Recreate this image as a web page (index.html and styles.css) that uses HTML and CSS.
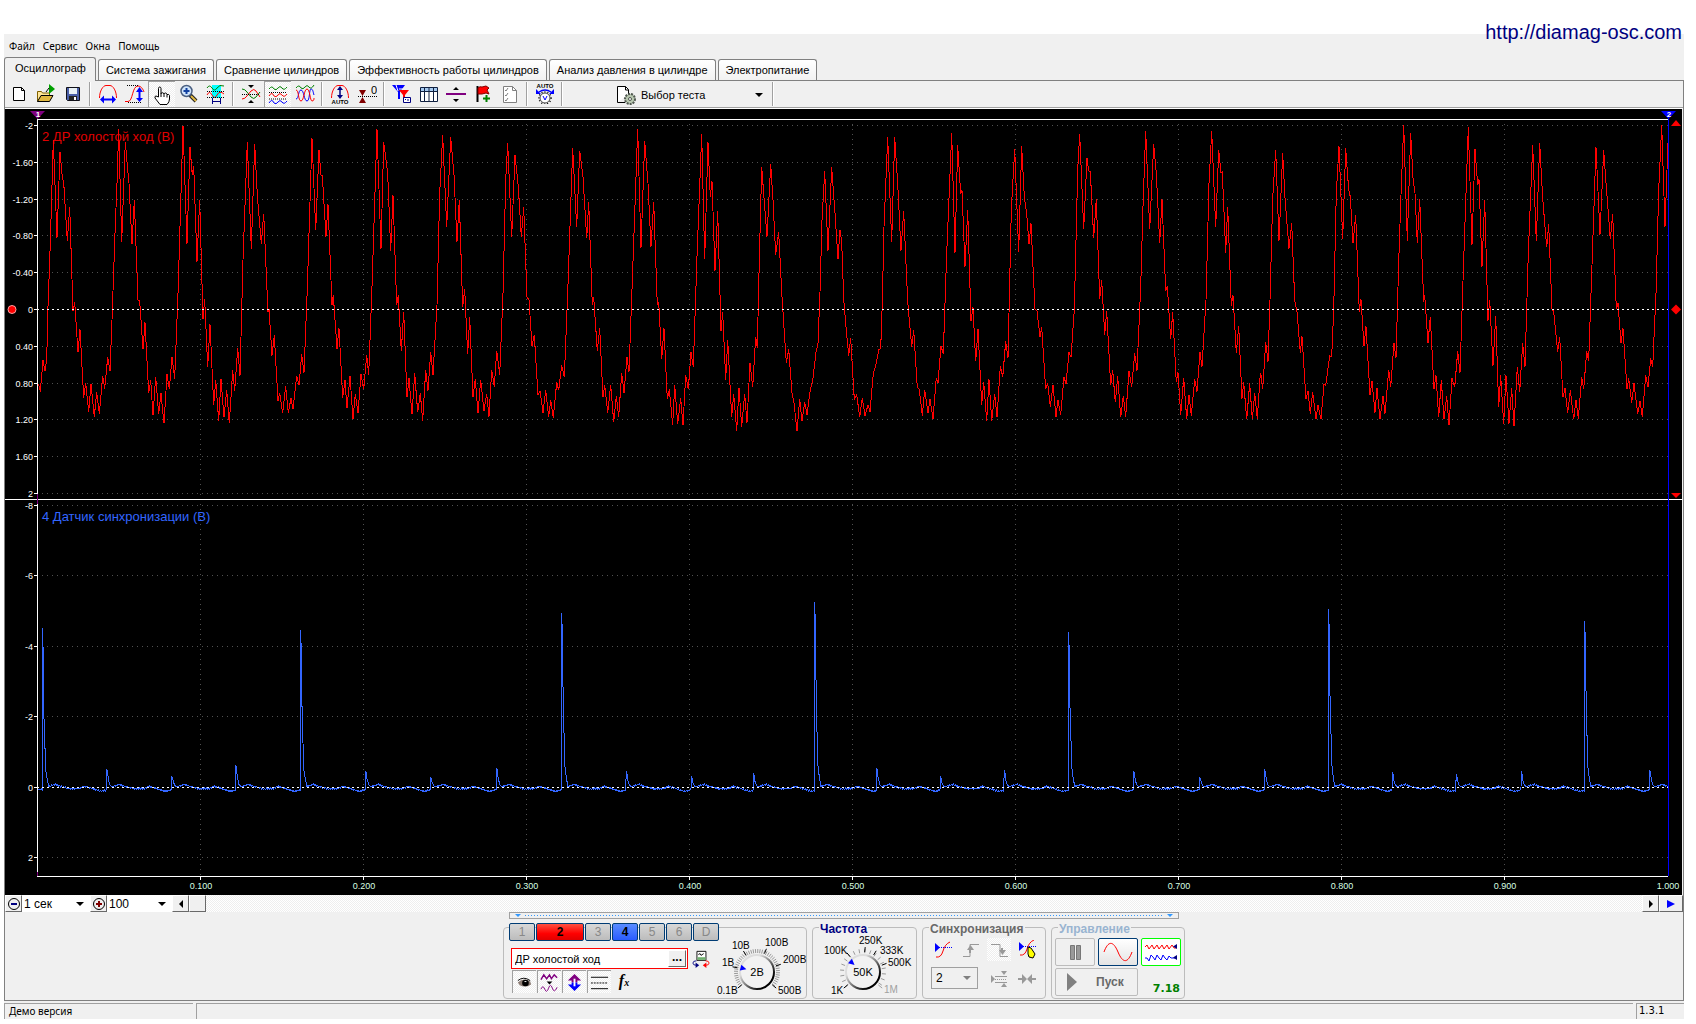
FILE: index.html
```html
<!DOCTYPE html>
<html lang="ru">
<head>
  <meta charset="UTF-8" />
  <meta name="viewport" content="width=device-width, initial-scale=1.0" />
  <title>Осциллограф</title>
  <link rel="stylesheet" href="styles.css">
</head>
<body>
  <a class="site-link" href="http://diamag-osc.com">http://diamag-osc.com</a>

  <div class="window">
    <nav class="menu">
      <a href="#">Файл</a>
      <a href="#">Сервис</a>
      <a href="#">Окна</a>
      <a href="#">Помощь</a>
    </nav>

    <div class="tabs" role="tablist">
      <button class="tab active" role="tab" aria-selected="true">Осциллограф</button>
      <button class="tab" role="tab">Система зажигания</button>
      <button class="tab" role="tab">Сравнение цилиндров</button>
      <button class="tab" role="tab">Эффективность работы цилиндров</button>
      <button class="tab" role="tab">Анализ давления в цилиндре</button>
      <button class="tab" role="tab">Электропитание</button>
    </div>

    <main class="page">
      <div class="toolbar">
        <button aria-label="Новый"><svg viewBox="0 0 20 20"><path d="M4.500 3.500h8l3 3v10h-11z" fill="#fff" stroke="#000"/><path d="M12.500 3.500v3h3" fill="none" stroke="#000"/></svg></button>
        <button aria-label="Открыть"><svg viewBox="0 0 20 20"><path d="M1.500 17.500v-10h4l1 1.500h7v3" fill="#ffe79a" stroke="#806000"/><path d="M1.500 17.500l3.500-6h12l-3.500 6z" fill="#e0b840" stroke="#000"/><path d="M13 0l6 5-6 5z" fill="#00a000"/><path d="M10 8l3-4" stroke="#000"/></svg></button>
        <button aria-label="Сохранить"><svg viewBox="0 0 20 20"><path d="M3.500 3.500h13v13h-12l-1-1z" fill="#4a5fa8" stroke="#101018"/><path d="M6 4h8v6H6z" fill="#e8f0f4"/><path d="M6 12h8v4H6z" fill="#222"/><path d="M11 13h2v3h-2z" fill="#fff"/></svg></button>
        <span class="sep"></span>
        <button aria-label="Время"><svg viewBox="0 0 20 20"><path d="M1.500 14C1.500 7 5 1.500 8 1.500h4c3 0 6.500 5.500 6.500 12.500" fill="none" stroke="red"/><path d="M5 15.500h10" stroke="#00f" stroke-width="2"/><path d="M6 11.500v8l-4-4zM14 11.500v8l4-4z" fill="#00f"/></svg></button>
        <button aria-label="Амплитуда"><svg viewBox="0 0 20 20"><path d="M0 17.500h3c5 0 4-15.500 10-15.500 3 0 5 3 6 6" fill="none" stroke="red"/><path d="M2 1.500h12M3 18.500h13" stroke="#000" stroke-dasharray="1 1"/><path d="M14.500 6v9" stroke="#00f" stroke-width="2"/><path d="M11 8l3.500-5L18 8zM11 14l3.500 4 3.500-4z" fill="#00f"/></svg></button>
        <button class="pressed" aria-label="Рука"><svg viewBox="0 0 20 20"><path d="M6.500 12V3.500q0-1.500 1.200-1.500t1.300 1.500V9q0-1.300 1.300-1.300T12 9q.3-1 1.500-1t1.500 1.500q2-.5 2.500 1V14q0 3-2.500 5.500H8L3 13q-.5-2 1-2z" fill="#fff" stroke="#000"/><path d="M9 9v3M12 9v3M15 9.500v3" stroke="#000"/></svg></button>
        <button aria-label="Лупа"><svg viewBox="0 0 20 20"><path d="M11 11l6 6" stroke="#222" stroke-width="4"/><path d="M12 12l5 5" stroke="#e0b840" stroke-width="2"/><circle cx="7.500" cy="7" r="5.500" fill="#cfe4fa" stroke="#4a5f80" stroke-width="1.500"/><path d="M4.500 7h6M7.500 4v6" stroke="#1040a0" stroke-width="2"/></svg></button>
        <button aria-label="Фрагмент"><svg viewBox="0 0 20 20"><path d="M6 1h9v13H6z" fill="#0ff"/><path d="M1 4q2.500-4 5 0t5 0 7-2" fill="none" stroke="green"/><path d="M1 11q2.500-5 5 0t5 0 7-1" fill="none" stroke="red"/><path d="M1 7.500h18M1 13.500h18" stroke="#000" stroke-dasharray="1 1"/><path d="M6.500 14v6M14.500 14v6M7 17.500h8" stroke="navy"/></svg></button>
        <span class="sep"></span>
        <button aria-label="Совместить нули"><svg viewBox="0 0 20 20"><path d="M1 5q3 0 5 3l4 5q3 3 5 0l4-5" fill="none" stroke="green"/><path d="M1 15q3 0 5-3l4-5q3-3 5 0l4 6" fill="none" stroke="red"/><path d="M1 10.500h18" stroke="#000" stroke-dasharray="1 1"/><path d="M7 1h6l-3 3zM7 19h6l-3-3z"/></svg></button>
        <button class="pressed" aria-label="Раздельно"><svg viewBox="0 0 20 20"><path d="M1 4q3-4 5 0 2 2 4-1t4 0 5-1" fill="none" stroke="green"/><path d="M1 11q3-5 5 0 2 2 4-1t4 0 5-1" fill="none" stroke="red"/><path d="M1 18q3-5 5 0 2 2 4-1t4 0 5-1" fill="none" stroke="#00f"/><path d="M1 7.500h18M1 14h18" stroke="#000" stroke-dasharray="1 1"/></svg></button>
        <button aria-label="Вместе"><svg viewBox="0 0 20 20"><path d="M1 4q3-4 5 0 2 2 4-1t4 0 5-2" fill="none" stroke="green"/><path d="M1 15C4 15 3 6 6 6s3 11 6 11 2-12 4-12 2 3 3 6" fill="none" stroke="#00f"/><path d="M1 6c3 0 2 11 5 11S9 5 12 5s3 12 5 12 2-2 2-3" fill="none" stroke="red"/></svg></button>
        <span class="sep"></span>
        <button aria-label="Авто амплитуда"><svg viewBox="0 0 20 20"><path d="M1.500 14C1.500 7 5 1.500 8 1.500h4c3 0 6.500 5.500 6.500 12.500" fill="none" stroke="red"/><path d="M10 4v9" stroke="navy" stroke-width="1.500"/><path d="M7 6l3-4 3 4zM7 11l3 4 3-4z" fill="navy"/><text x="10" y="20" class="tiny">AUTO</text></svg></button>
        <button aria-label="Установить ноль"><svg viewBox="0 0 20 20"><path d="M2 6h7l-3.500 6zM2 19h7l-3.500-6z" fill="maroon"/><path d="M1 12.500h19" stroke="#000" stroke-dasharray="1 1"/><text x="17" y="10" class="zero">0</text></svg></button>
        <span class="sep"></span>
        <button aria-label="Фильтр"><svg viewBox="0 0 20 20"><path d="M0 1h13L8 8v7H6V8z" fill="#00f"/><path d="M7 6h10l-4 5v4h-2v-4z" fill="red"/><path d="M4 1l2 6M7 5h4" stroke="#fff"/><path d="M11.500 13.500h7v5h-7z" fill="#fff" stroke="navy"/><path d="M13 15.500h1M15 16h2" stroke="navy"/></svg></button>
        <button aria-label="Таблица"><svg viewBox="0 0 20 20"><path d="M1.500 3.500h17v14h-17z" fill="#fff" stroke="#102040"/><path d="M2 4h16v3H2z" fill="#a6caf0"/><path d="M1 7.500h18M5.500 3v14M10 3v14M14.500 3v14" stroke="#102040"/></svg></button>
        <button aria-label="Разделитель"><svg viewBox="0 0 20 20"><path d="M0 10h20" stroke="purple" stroke-width="2"/><path d="M7 6h6l-3-3zM7 15h6l-3 3z"/></svg></button>
        <button aria-label="Метка"><svg viewBox="0 0 20 20"><path d="M4.500 2v16" stroke="#000" stroke-width="2"/><path d="M5 4q2-2 4-1l4-1 3 2-2 2 2 4-3-1-4 1H5z" fill="red" stroke="#800000"/><path d="M13.500 11v7M10 14.500h7" stroke="green" stroke-width="2"/></svg></button>
        <button aria-label="Список"><svg viewBox="0 0 20 20"><path d="M3.500 2.500h9l4 4v12h-13z" fill="#fff" stroke="#808080"/><path d="M12.500 2.500v4h4" fill="none" stroke="#808080"/><path d="M5 6l1 1 2-3M5 11l1 1 2-3M5 16l1 1 2-3" fill="none" stroke="#808080"/></svg></button>
        <span class="sep"></span>
        <button aria-label="Авто предел"><svg viewBox="0 0 20 20"><text x="10" y="4" class="tiny">AUTO</text><path d="M4 8q6-4 12 0" fill="none" stroke="#00f" stroke-width="1.500"/><path d="M1 5v5h5zM19 5v5h-5z" fill="#00f"/><circle cx="10" cy="14" r="6" fill="none" stroke="#000" stroke-width="1.500" stroke-dasharray="1 2"/><circle cx="10" cy="14" r="5" fill="#fff" stroke="#444"/><path d="M8 12l2 4 2-4" fill="none" stroke="#00f"/></svg></button>
        <span class="sep"></span>
        <div class="test-picker">
          <svg viewBox="0 0 20 20"><path d="M1.500 17.500v-16h8l3 3v5M9 17.500H1.500" fill="#fff" stroke="#000"/><path d="M9.500 1.500v3.500h3" fill="none" stroke="#000"/><circle cx="14" cy="14" r="5" fill="#b8c8b0" stroke="#505850" stroke-width="2" stroke-dasharray="2 1"/><circle cx="14" cy="14" r="1.500" fill="#fff" stroke="#505850"/></svg>
          <label class="picker">
            <select aria-label="Выбор теста"><option>Выбор теста</option></select>
          </label>
        </div>
        <span class="sep"></span>
      </div>

      <div class="scope"><svg id="scope"></svg></div>

      <div class="scroll-row">
        <button class="raised" aria-label="Уменьшить"><svg viewBox="0 0 14 14"><circle cx="7" cy="7" r="5.500" fill="none" stroke="#000"/><path d="M4 7h6" stroke="navy" stroke-width="2"/></svg></button>
        <label class="picker white"><select aria-label="Развертка"><option>1 сек</option></select></label>
        <button class="raised" aria-label="Увеличить"><svg viewBox="0 0 14 14"><circle cx="7" cy="7" r="5.500" fill="none" stroke="#000"/><path d="M4 7h6M7 4v6" stroke="maroon" stroke-width="2"/></svg></button>
        <label class="picker white"><select aria-label="Масштаб"><option>100</option></select></label>
        <button class="raised" aria-label="Влево"><svg viewBox="0 0 14 14"><path d="M9 3v8L5 7z"/></svg></button>
        <div class="track"><span class="thumb"></span></div>
        <button class="raised" aria-label="Вправо"><svg viewBox="0 0 14 14"><path d="M5 3v8l4-4z"/></svg></button>
        <button class="raised wide" aria-label="Воспроизвести"><svg viewBox="0 0 14 14"><path d="M3 3v8l8-4z" fill="#00f"/></svg></button>
      </div>

      <div class="bottom">
        <div class="controls">
          <div class="splitter"><i></i><span></span><i></i></div>

          <div class="groups">
            <section class="group channel">
              <div class="channel-left">
                <div class="channels">
                  <button>1</button>
                  <button class="red">2</button>
                  <button>3</button>
                  <button class="blue">4</button>
                  <button>5</button>
                  <button>6</button>
                  <button>D</button>
                </div>
                <div class="name-row">
                  <div class="name-box">
                    <input type="text" value="ДР холостой ход" aria-label="Название канала">
                    <button aria-label="Выбрать датчик">...</button>
                  </div>
                  <svg viewBox="0 0 20 20"><path d="M5.500 1.500h10v10h-10z" fill="#fff" stroke="#000"/><path d="M6 8h9v3H6z" fill="#70b070"/><path d="M7 5l2-1 1 2 3-2" fill="none" stroke="#000"/><path d="M5 12q-4 0-4 2.500T5 17" fill="none" stroke="navy"/><path d="M4 14v6l4-3z" fill="navy"/><path d="M15 12q4 0 4 2.500T15 17" fill="none" stroke="red"/><path d="M16 14v6l-4-3z" fill="red"/></svg>
                </div>
                <div class="view-row">
                  <button class="pressed" aria-label="Показать"><svg viewBox="0 0 20 20"><path d="M3 10q6-6 13-1l1 3q-6 4-12 1z" fill="#8c7c74"/><circle cx="11" cy="10.500" r="3.500"/><path d="M3 8q6-5 13 0" fill="none" stroke="#000"/><path d="M10 9h2" stroke="#fff"/></svg></button>
                  <button class="pressed" aria-label="Сжать"><svg viewBox="0 0 20 20"><path d="M1 7l3-5 3 4 3-4 2 4 3-4 3 3" fill="none" stroke="purple" stroke-width="1.500"/><path d="M7 9h6l-3 3z"/><path d="M1 17q2-5 4 0t4-1 4 0 5-1" fill="none" stroke="purple"/></svg></button>
                  <button class="pressed" aria-label="Инвертировать"><svg viewBox="0 0 20 20"><path d="M10 1l7 7h-4v2H7V8H3z" fill="purple"/><path d="M10 19l7-7h-4v-2H7v2H3z" fill="#00f"/><path d="M10 6v8" stroke="#fff" stroke-width="2"/></svg></button>
                  <button class="pressed" aria-label="Линии"><svg viewBox="0 0 20 20"><path d="M1 4.500h18M1 16.500h18" stroke="#000"/><path d="M1 10.500h18" stroke="#000" stroke-dasharray="2 1"/></svg></button>
                  <button class="fx" aria-label="Функция">f<small>x</small></button>
                </div>
              </div>
              <svg class="dial-volts" id="volts" viewBox="0 0 86 68"></svg>
            </section>

            <section class="group freq">
              <h2>Частота</h2>
              <svg class="dial-freq" id="freq" viewBox="0 0 103 62"></svg>
            </section>

            <section class="group sync">
              <h2>Синхронизация</h2>
              <div class="sync-grid">
                <button aria-label="Уровень"><svg viewBox="0 0 20 20"><path d="M2 3v9l5-4.500z" fill="#00f"/><path d="M2 7.500h17" stroke="#00f" stroke-dasharray="1 1"/><path d="M3 17q5 1 7-6t7-9" fill="none" stroke="red"/></svg></button>
                <button aria-label="По фронту"><svg viewBox="0 0 20 20"><path d="M2 16.500h7v-12h9" fill="none" stroke="#999"/><path d="M9 8v5" stroke="#999" stroke-width="2"/><path d="M6 10l3.500-5 3.500 5z" fill="#999"/></svg></button>
                <button class="dither" aria-label="По спаду"><svg viewBox="0 0 20 20"><path d="M2 4.500h9v12h8" fill="none" stroke="#999"/><path d="M13 8v5" stroke="#999" stroke-width="2"/><path d="M10 10l3.500 5 3.500-5z" fill="#999"/></svg></button>
                <button aria-label="Уровень мышью"><svg viewBox="0 0 20 20"><path d="M2 2v9l5-4.500z" fill="#00f"/><path d="M2 6.500h17" stroke="#00f" stroke-dasharray="1 1"/><path d="M3 15q5 1 7-6t7-9" fill="none" stroke="red"/><path d="M11 7l3 1 4 6-2 4-4-1-1-3z" fill="#ff0" stroke="#000"/></svg></button>
                <label class="picker boxed"><select aria-label="Канал синхронизации"><option>2</option></select></label>
                <button aria-label="Окно"><svg viewBox="0 0 20 20"><path d="M2 6v8l4-4z" fill="#999"/><path d="M6 7.500h12M6 13.500h12" stroke="#999"/><path d="M6 10.500h12" stroke="#999" stroke-dasharray="1 1"/><path d="M12 2h6l-3 4zM12 18h6l-3-4z" fill="#999"/></svg></button>
                <button aria-label="Сузить"><svg viewBox="0 0 20 20"><path d="M1 10h6M13 10h6" stroke="#999" stroke-width="2"/><path d="M5 5v10l5-5zM15 5v10l-5-5z" fill="#999"/></svg></button>
              </div>
            </section>

            <section class="group run">
              <h2>Управление</h2>
              <div class="run-grid">
                <button aria-label="Пауза"><svg viewBox="0 0 34 22"><path d="M12.500 4.500h4v14h-4zM18.500 4.500h4v14h-4z" fill="#999" stroke="#777"/></svg></button>
                <button class="focus" aria-label="Осциллограмма"><svg viewBox="0 0 34 22"><path d="M3 11C7 0 12-1 17 11s10 11 14 0" fill="none" stroke="red"/></svg></button>
                <button class="green" aria-label="Каналы"><svg viewBox="0 0 34 22"><path d="M1 6l2-2 2 4 3-4 2 4 3-4 2 4 3-4 2 4 3-4 2 4 3-4 2 3h2" fill="none" stroke="red"/><path d="M1 17h2l2 3 2-6 2 2 2 3 2-5 2 3 2 2 2-5 2 3 2 2 2-4 2 2h4" fill="none" stroke="#00f"/><path d="M33 3v5l-4-2.500zM33 14v5l-4-2.500z" fill="navy"/></svg></button>
                <button class="start"><svg viewBox="0 0 12 20"><path d="M1 1v18l10-9z" fill="#808080"/></svg>Пуск</button>
                <output>7.18</output>
              </div>
            </section>
          </div>
        </div>
      </div>
    </main>

    <footer class="status">
      <span class="demo">Демо версия</span>
      <span class="info"></span>
      <span class="version">1.3.1</span>
    </footer>
  </div>

  <script src="scope.js"></script>
</body>
</html>
```

FILE: styles.css
```css
:root {
  --face: #f0f0f0;
  --shadow: #a0a0a0;
  --dark: #808080;
  --edge: #bcbcbc;
  --dither: repeating-conic-gradient(#fff 0 25%, #eee 0 50%) 0 0 / 2px 2px;
}

* {
  margin: 0;
  padding: 0;
  box-sizing: border-box;
}

body {
  height: 100vh;
  min-height: 600px;
  display: flex;
  padding: 34px 12px 5px 4px;
  position: relative;
  background: #fff;
  color: #000;
  font-family: "Liberation Sans", Arial, sans-serif;
  font-size: 12px;
  line-height: 14px;
}

button,
input,
select {
  font: inherit;
  color: inherit;
  border: 0;
  border-radius: 0;
  background: none;
}

svg {
  display: block;
}

.site-link {
  position: absolute;
  top: 21px;
  right: 14px;
  font-size: 20px;
  line-height: 22px;
  color: #000080;
  text-decoration: none;
}

.window {
  flex: 1;
  min-width: 0;
  display: flex;
  flex-direction: column;
  background: var(--face);
}

/* menu and tabs */
.menu {
  display: flex;
  gap: 8px;
  height: 23px;
  padding: 5px 5px 0;
  font-family: "Noto Sans", Tahoma, sans-serif;
  font-size: 10px;
}

.menu a {
  color: #000;
  text-decoration: none;
}

.tabs {
  display: flex;
  align-items: flex-end;
  gap: 2px;
}

.tab {
  height: 21px;
  padding: 0 7px;
  border: 1px solid var(--dark);
  border-bottom: 0;
  border-radius: 3px 3px 0 0;
  background: linear-gradient(#fff, #f2f2f2);
  font-size: 11px;
  white-space: nowrap;
}

.tab.active {
  height: 24px;
  padding: 0 9px 3px 10px;
  margin-bottom: -1px;
  background: var(--face);
  z-index: 1;
}

.page {
  flex: 1;
  min-height: 0;
  display: flex;
  flex-direction: column;
  border: 1px solid var(--dark);
}

/* toolbar */
.toolbar {
  display: flex;
  height: 28px;
  border-bottom: 1px solid #fff;
  box-shadow: inset 0 -1px var(--shadow);
}

.toolbar button {
  width: 27px;
  height: 26px;
  display: grid;
  place-items: center;
}

.toolbar svg {
  width: 20px;
  height: 20px;
}

.pressed {
  background: var(--dither);
  border-left: 1px solid var(--shadow);
  border-top: 1px solid var(--shadow);
}

.sep {
  width: 2px;
  height: 24px;
  margin: 1px 3px;
  border-left: 1px solid var(--shadow);
  border-right: 1px solid #fff;
}

.tiny {
  font-size: 6px;
  font-weight: bold;
  text-anchor: middle;
}

.zero {
  font-size: 11px;
  text-anchor: middle;
}

.test-picker {
  width: 203px;
  padding-left: 50px;
  display: flex;
  align-items: center;
  gap: 5px;
  font-size: 11px;
}

.picker {
  flex: 1;
  position: relative;
  display: flex;
}

.picker::after {
  content: "";
  position: absolute;
  right: 6px;
  top: 50%;
  margin-top: -2px;
  border: 4px solid transparent;
  border-top-color: #000;
  border-bottom: 0;
  pointer-events: none;
}

.picker select {
  width: 100%;
  appearance: none;
}

/* chart */
.scope {
  flex: 1;
  min-height: 0;
  margin-right: 1px;
  background: #000;
}

.scope svg {
  width: 100%;
  height: 100%;
}

.scope text {
  font-size: 9px;
  fill: #fff;
}

.scope .time {
  fill: #d8ffe0;
  text-anchor: middle;
}

.scope .volts {
  text-anchor: end;
}

.scope .name {
  font-size: 13px;
}

.scope .marker {
  font-size: 8px;
  font-weight: bold;
  text-anchor: middle;
}

.scope path {
  fill: none;
  shape-rendering: crispEdges;
}

/* scroll row */
.scroll-row {
  display: flex;
  height: 17px;
}

.raised,
.thumb {
  width: 17px;
  height: 17px;
  display: grid;
  place-items: center;
  background: var(--face);
  border: 1px solid #fff;
  border-right-color: #696969;
  border-bottom-color: #696969;
}

.raised svg {
  width: 14px;
  height: 14px;
}

.raised.wide {
  width: 24px;
}

.picker.white {
  flex: 0 0 68px;
  background: #fff;
  padding-left: 2px;
}

.picker.white + .raised + .picker.white {
  flex-basis: 65px;
}

.track {
  flex: 1;
  background: var(--dither);
}

/* control panel */
.bottom {
  height: 88px;
  display: flex;
  justify-content: center;
}

.splitter {
  display: flex;
  align-items: center;
  justify-content: space-between;
  gap: 4px;
  height: 7px;
  margin: 0 6px;
  padding: 0 5px;
  border: 1px solid var(--shadow);
}

.splitter i {
  border: 3px solid transparent;
  border-top-color: #3399ff;
  border-bottom: 0;
}

.splitter span {
  flex: 1;
  height: 1px;
  background: repeating-linear-gradient(90deg, #3399ff 0 1px, transparent 1px 3px);
}

.groups {
  display: flex;
  gap: 5px;
  margin-top: 8px;
}

.group {
  height: 72px;
  border: 1px solid var(--edge);
  border-radius: 4px;
}

.group h2 {
  width: fit-content;
  height: 14px;
  margin: -7px 0 0 6px;
  padding: 0 1px;
  background: var(--face);
  font-size: 12px;
  line-height: 16px;
  color: #696969;
}

.group.channel {
  width: 304px;
  display: flex;
}

.channel-left {
  width: 215px;
  padding-left: 5px;
}

.channels {
  display: flex;
  gap: 1px;
  margin-top: -5px;
  padding-right: 2px;
}

.channels button {
  flex: 0 0 26px;
  height: 18px;
  border: 1px solid #003c74;
  border-radius: 2px;
  background: linear-gradient(#d8d8d8, #bcbcbc);
  color: #888;
}

.channels .red {
  flex-basis: 48px;
  background: linear-gradient(#ff5040, #f00 60%, #e00000);
  color: #000;
  font-weight: bold;
}

.channels .blue {
  background: linear-gradient(#5a8cff, #2a5cff);
  color: #000;
  font-weight: bold;
}

.name-row {
  display: flex;
  align-items: center;
  gap: 4px;
  margin: 7px 0 1px 2px;
}

.name-row svg {
  width: 18px;
  height: 20px;
}

.name-box {
  display: flex;
  width: 177px;
  height: 21px;
  border: 1px solid #f00;
  background: #fff;
}

.name-box input {
  flex: 1;
  min-width: 0;
  padding-left: 3px;
  font-size: 11px;
}

.name-box button {
  width: 18px;
  margin: 1px;
  background: var(--face);
  border: 1px solid #fff;
  border-right-color: #696969;
  border-bottom-color: #696969;
  font-weight: bold;
  line-height: 8px;
  padding-bottom: 4px;
}

.view-row {
  display: flex;
  gap: 1px;
  margin-left: 3px;
}

.view-row button {
  width: 24px;
  height: 23px;
  display: grid;
  place-items: center;
}

.view-row svg {
  width: 19px;
  height: 19px;
}

.view-row .fx {
  display: block;
  font-family: "Liberation Serif", serif;
  font-size: 16px;
  font-style: italic;
  font-weight: bold;
}

.fx small {
  font-size: 10px;
}

.group svg[id] {
  overflow: visible;
}

.group svg[id] text {
  font-size: 10px;
}

.group svg[id] .value {
  font-size: 11px;
}

.dial-volts {
  width: 86px;
  height: 68px;
}

.group.freq {
  width: 105px;
}

.group.freq h2 {
  color: #000080;
}

.dial-freq {
  width: 103px;
  height: 62px;
}

.group.sync {
  width: 124px;
}

.sync-grid {
  display: grid;
  grid-template-columns: repeat(4, 24px);
  column-gap: 4px;
  row-gap: 6px;
  padding: 3px 0 0 8px;
}

.sync-grid button {
  height: 23px;
  display: grid;
  place-items: center;
}

.sync-grid svg {
  width: 20px;
  height: 20px;
}

.dither {
  background: var(--dither);
}

.picker.boxed {
  grid-column: span 2;
  width: 47px;
  height: 22px;
  border: 1px solid var(--shadow);
  padding-left: 4px;
}

.picker.boxed::after {
  border-top-color: var(--dark);
}

.group.run {
  width: 134px;
}

.group.run h2 {
  color: #99b4d1;
}

.run-grid {
  display: grid;
  grid-template-columns: repeat(3, 40px);
  gap: 2px 3px;
  padding: 3px 0 0 3px;
}

.run-grid button {
  height: 28px;
  display: grid;
  place-items: center;
  border: 1px solid var(--edge);
  border-radius: 2px;
}

.run-grid svg {
  width: 34px;
  height: 22px;
}

.run-grid .focus {
  border-color: #003c74;
  background: linear-gradient(#fff, #e4e4e4);
}

.run-grid .green {
  border: 1px solid #0f0;
  background: #fff;
}

.run-grid .start {
  grid-column: span 2;
  display: flex;
  align-items: center;
  gap: 18px;
  padding-left: 10px;
  font-weight: bold;
  color: #696969;
}

.run-grid .start svg {
  width: 12px;
  height: 20px;
}

.run-grid output {
  align-self: end;
  padding-right: 1px;
  text-align: right;
  font-family: "DejaVu Sans", sans-serif;
  font-size: 11px;
  font-weight: bold;
  color: #008000;
}

/* status bar */
.status {
  display: flex;
  gap: 3px;
  height: 18px;
  padding-top: 2px;
  font-family: "Noto Sans", Tahoma, sans-serif;
  font-size: 10px;
}

.status span {
  border-left: 1px solid var(--shadow);
  border-top: 1px solid var(--shadow);
  padding-left: 4px;
}

.status .demo {
  width: 189px;
}

.status .info {
  flex: 1;
}

.status .version {
  width: 48px;
  padding-left: 2px;
  font-family: "DejaVu Sans", sans-serif;
}
```

FILE: scope.js
```js
// idle speed sensor: blocks of [sample, adc] pairs, 4890 samples per second
const idle = [
  [-113, '115,823 120,845 128,750 134,783 139,750 143,590 150,400 159,90 170,383 179,127 186,200 190,217 201,392 208,291 218,602 223,577 233,727 239,658 250,863 256,820 265,905 272,823 282,920 289,847 297,911 307,797 313,836 322,742 329,784 335,630 345,345 350,220 355,58 364,395 375,95 383,190 386,220 395,403 402,270 413,570 418,573 428,718 434,637 445,850 451,811 458,916 466,800 475,913 482,850 491,940 500,793 507,838 515,742 523,806 533,550 548,48 560,401 569,112 576,195 580,167 590,455 598,270 608,628 613,568 622,772 629,643 640,886 646,811 655,932 662,808 671,922 679,840 687,940 697,781 703,842 712,715 719,797 728,450 741,97 753,416 763,102 771,255 783,401 790,312 803,607 806,597 815,737 822,676 833,872 838,848 847,910 856,829 864,908 872,865 878,898 889,798 896,826 904,733 911,788 921,535 935,85 946,361 956,121 962,195 966,195 977,380 983,283 995,586 999,556 1010,716 1016,655 1027,863 1034,811 1040,895 1049,798 1058,928 1065,853 1073,910 1082,793 1090,838 1099,736 1105,794 1115,530 1130,58 1142,416 1150,97 1162,190 1171,422 1178,256 1189,586 1194,556 1203,724 1210,606 1220,862 1226,805 1235,913 1243,790 1252,907'],
  [1147, '0,850 7,932 16,780 23,842 31,727 38,795 50,585 58,250 67,76 79,350 91,82 101,195 110,395 117,270 127,592 133,538 142,733 148,622 158,860 165,807 173,910 181,810 191,902 199,852 206,920 214,780 222,830 229,723 238,795 248,550 256,210 262,100 274,382 284,136 294,230 303,380 310,292 320,560 326,570 335,707 342,675 353,856 359,842 368,908 376,840 385,920 391,870 399,923 409,817 415,841 424,766 432,802 442,550 457,115 469,352 478,123 488,200 499,385 505,277 516,585 520,562 531,722 538,655 548,862 553,826 562,908 571,826 580,935 588,858 595,920 604,790 611,848 620,742 626,785 637,480 652,58 662,413 673,94 683,220 692,410 700,277 711,585 715,576 724,746 731,655 741,868 747,838 757,944 763,826 772,941 781,865 788,946 796,795 804,838 812,727 819,770 830,440 844,73 853,448 863,97 870,260 875,214 884,482 892,304 902,662 907,607 916,809 922,690 934,920 940,852 949,962 956,834 964,950 973,852 980,938 989,759 997,830 1006,681 1011,713 1016,490 1024,172 1040,380 1051,163 1058,270 1066,434 1075,367 1085,560 1098,758 1105,718 1115,850 1121,880 1130,962 1138,868 1145,932 1153,877 1160,914 1168,850 1178,805 1187,727 1193,700 1199,545 1205,330 1213,184 1223,422 1234,172 1244,310 1253,448 1259,360'],
  [2407, '4,395 10,567 16,640 25,737 31,685 42,868 49,855 58,920 66,864 74,917 83,885 89,905 99,790 106,768 115,720 121,715 126,580 131,350 142,82 154,395 163,82 172,220 182,422 190,304 202,575 214,710 220,660 231,833 237,838 246,917 253,840 263,908 269,868 278,926 288,803 293,818 302,709 309,731 319,430 334,70 344,428 352,106 361,253 365,241 374,470 382,301 392,632 398,592 406,754 413,657 424,884 430,817 439,932 446,808 454,932 463,853 470,922 480,769 487,802 496,694 503,743 513,300 523,118 535,425 544,109 552,260 559,312 566,402 572,340 584,597 590,603 599,680 604,652 616,838 622,820 630,890 638,826 647,920 653,870 661,914 671,802 677,821 686,727 692,742 702,600 712,180 718,73 730,356 740,145 745,182 750,185 760,383 768,268 778,568 784,511 793,674 799,604 811,826 817,781 825,877 832,799 841,922 849,858 856,920 866,784 874,830 883,730 890,782 901,530 908,290 916,64 928,358 940,103 948,190 958,398 965,268 976,542 981,527 991,688 997,607 1008,817 1013,787 1021,914 1030,805 1039,926 1046,856 1053,917 1063,808 1070,845 1079,727 1085,770 1097,570 1106,220 1114,64 1126,350 1135,121 1142,188 1146,185 1156,428 1162,290 1173,587 1178,556 1188,728 1195,649 1205,866 1210,817 1219,928 1228,820 1236,928 1243,850 1251,928 1260,790'],
  [3667, '2,795 7,838 16,697 23,755 29,570 37,265 46,121 56,392 67,130 74,265 86,416 94,340 103,570 110,605 120,728 125,679 137,868 143,844 150,911 157,847 167,926 173,885 182,928 191,822 196,826 208,737 214,740 220,600 228,250 236,109 247,387 256,115 265,240 270,260 278,400 286,316 297,605 302,568 311,708 317,649 329,854 335,814 344,908 350,834 359,928 368,858 374,911 385,779 391,832 401,700 407,745 415,457 422,255 430,46 441,392 451,70 458,205 464,250 471,398 478,268 490,575 493,556 503,698 510,622 521,836 527,796 535,922 543,811 551,928 559,858 566,946 575,805 583,832 592,724 599,788 610,450 624,52 635,404 644,118 652,226 656,208 665,470 673,270 683,632 688,570 698,767 706,619 715,892 721,796 730,941 737,796 746,941 754,835 761,949 771,770 778,845 787,700 794,770 804,430 817,106 828,394 838,100 847,265 859,412 865,343 875,597 880,605 892,725 898,682 908,862 914,835 922,910 930,841 940,928 947,870 954,926 964,802 970,838 979,724 985,752 995,465 1007,112 1019,374 1030,121 1038,230 1050,388 1057,313 1068,597 1073,580 1082,700 1088,655 1100,838 1105,805 1114,878 1121,820 1132,911 1139,874 1146,920 1156,796 1163,832 1171,745 1177,770 1187,550 1195,240 1204,46 1214,350 1220,180 1223,100']
];
const RATE = 4890;
const ADC_ZERO = 597;
const ADC_PER_VOLT = 276;

// sync sensor pulses: [ms, volts]
const pulses = [
  [2.6, -4.52], [42.1, -0.5], [82, -0.3], [121.2, -0.63], [161, -4.46], [200.9, -0.46],
  [240.8, -0.28], [281.3, -0.54], [321.2, -4.95], [360.7, -0.45], [400.6, -0.3], [438.7, -0.4],
  [476.4, -5.26], [514.4, -0.55], [553.4, -0.3], [592.6, -0.48], [632.2, -4.4], [672.1, -0.45],
  [712.6, -0.28], [752.5, -0.5], [791.7, -5.06], [830.7, -0.43], [869.9, -0.36], [909.8, -0.46],
  [948.8, -4.72], [988.7, -0.48]
];

// shape after a pulse: the decay is relative to its height, the tail is in volts
const decay = [[0.1, 1], [0.7, 0.8], [1, 0.45], [1.6, 0.28], [2.2, 0.1], [3.4, 0.03]];
const tail = [
  [4, -0.02], [8, -0.08], [11, -0.02], [13, 0], [17, 0.05], [23, 0.04],
  [26, -0.02], [30, 0.03], [33, 0.08], [36, 0.12], [40, 0.08]
];

const svg = document.getElementById('scope');

function text(x, y, cls, value, extra = '') {
  return `<text x="${x}" y="${y}" class="${cls}" ${extra}>${value}</text>`;
}

function line(d, color, extra = '') {
  return `<path d="${d}" stroke="${color}" ${extra}/>`;
}

function tailAt(dt) {
  const i = Math.max(1, tail.findIndex(p => p[0] >= dt));
  const [t0, v0] = tail[i - 1];
  const [t1, v1] = tail[i];
  return v0 + (v1 - v0) * (dt - t0) / (t1 - t0);
}

function syncPoints() {
  const pts = [[0, 0.08], [2, 0.05]];
  pulses.forEach(([t, v], i) => {
    const end = i + 1 < pulses.length ? pulses[i + 1][0] : 1000;
    pts.push([t, 0.08]);
    decay.forEach(([dt, k]) => pts.push([t + dt, v * k]));
    // one count of noise on the flat part
    let noise = 0.015;
    for (let dt = 4; dt < 40 && t + dt < end; dt += 0.6) {
      pts.push([t + dt, tailAt(dt) + noise]);
      noise = -noise;
    }
  });
  pts.push([1000, 0.02]);
  return pts;
}

function draw() {
  const w = svg.clientWidth;
  const h = svg.clientHeight;
  const left = 32;
  const right = w - 14;
  const top = 10;
  const bottom = h - 19;
  const split = top + Math.round((bottom - top) * 0.502);
  const tx = s => left + 1 + s * (right - left - 1);
  let out = '';

  // upper channel -2..2 V, lower channel -8..2 V
  const y1 = v => top + 6 + (v + 2) / 4 * (split - top - 12);
  const y2 = v => split + 6 + (v + 8) / 10 * (bottom - split - 25);
  const row = y => Math.round(y) + 0.5;
  const grid = 'stroke-dasharray="1 4"';

  for (let i = 1; i < 10; i++) {
    const x = row(tx(i / 10) - 1);
    out += line(`M${x} ${top + 5}V${bottom}`, '#505050', grid);
    out += line(`M${x} ${bottom}v4`, '#fff');
  }
  for (let i = 1; i <= 10; i++) {
    out += text(tx(i / 10), h - 6, 'time', (i / 10).toFixed(3));
  }
  for (let i = -5; i <= 5; i++) {
    const y = row(y1(i * 0.4));
    const label = i % 5 === 0 ? (i * 0.4).toFixed(0) : (i * 0.4).toFixed(2);
    if (i) out += line(`M${left} ${y}H${right}`, '#505050', grid);
    out += line(`M${left - 3} ${y}h3`, '#fff') + text(left - 4, y + 3, 'volts', label);
  }
  for (let v = -8; v <= 2; v += 2) {
    const y = row(y2(v));
    if (v) out += line(`M${left} ${y}H${right}`, '#505050', grid);
    out += line(`M${left - 3} ${y}h3`, '#fff') + text(left - 4, y + 3, 'volts', v);
  }

  // traces
  const red = idle.flatMap(([start, data]) => data.split(' ').map(pair => {
    const [s, adc] = pair.split(',').map(Number);
    return `${tx((start + s) / RATE).toFixed(1)},${y1((adc - ADC_ZERO) / ADC_PER_VOLT).toFixed(1)}`;
  }));
  const blue = syncPoints().map(([t, v]) => `${tx(t / 1000).toFixed(1)},${(y2(v) + 0.5).toFixed(1)}`);
  out += text(left + 5, top + 22, 'name', '2 ДР холостой ход (В)', 'style="fill:#e00000"');
  out += text(left + 5, split + 22, 'name', '4 Датчик синхронизации (В)', 'style="fill:#3366ff"');
  out += line('M' + red.join('L'), '#f00');
  out += line('M' + blue.join('L'), '#3366ff');
  out += line(`M${left} ${row(y1(0))}H${right}`, '#fff', 'stroke-dasharray="2 3"');
  out += line(`M${left} ${row(y2(0))}H${right}`, '#fff', 'stroke-dasharray="2 3"');

  // frame
  out += line(`M${left} ${top + 0.5}H${right}M0 ${split + 0.5}H${w}M${left} ${bottom + 0.5}H${right}`, '#fff');
  out += line(`M${left + 0.5} ${top}V${bottom}`, '#fff');
  out += line(`M${left + 0.5} 5V${top}M${left + 0.5} ${split - 5}v10M${left + 0.5} ${bottom - 4}v4`, '#800080');
  out += line(`M${right + 0.5} 5V${bottom}`, '#00f');

  // cursors and level handles
  const zero = row(y1(0));
  out += `<polygon points="${left - 7},2 ${left + 8},2 ${left + 0.5},10" fill="#800080"/>`;
  out += `<polygon points="${right - 7},2 ${right + 8},2 ${right + 0.5},10" fill="#00f"/>`;
  out += text(left + 1, 8, 'marker', 1) + text(right + 1, 8, 'marker', 2);
  out += `<circle cx="7" cy="${zero}" r="4" fill="red" stroke="#ffa0a0"/>`;
  out += `<polygon points="${w - 6},${zero - 5} ${w - 1},${zero} ${w - 6},${zero + 5} ${w - 11},${zero}" fill="red"/>`;
  out += `<polygon points="${w - 6},11 ${w - 1},17 ${w - 11},17" fill="red"/>`;
  out += `<polygon points="${w - 6},${split - 1} ${w - 1},${split - 6} ${w - 11},${split - 6}" fill="red"/>`;
  svg.innerHTML = out;
}

// rotary switch: ticks go clockwise from the lower left
function dial(id, cx, cy, value, pointer, ring, labels) {
  const at = (a, r) => {
    const rad = a * Math.PI / 180;
    return `${(cx + Math.sin(rad) * r).toFixed(1)} ${(cy - Math.cos(rad) * r).toFixed(1)}`;
  };
  let out = `<defs><linearGradient id="${id}-rim" x1="0" y1="0" x2="1" y2="1"><stop offset=".3" stop-color="#ddd"/><stop offset=".8" stop-color="#000"/></linearGradient></defs>`;
  for (let a = -130; a <= 130; a += ring) {
    out += `<path d="M${at(a, 19)}L${at(a, 23)}" stroke="#999"/>`;
  }
  labels.forEach(([a, x, y, name, color = '#000']) => {
    out += `<path d="M${at(a, 20)}L${at(a, 25)}" stroke="${color}"/>`;
    out += `<text x="${x}" y="${y}" fill="${color}">${name}</text>`;
  });
  out += `<circle cx="${cx}" cy="${cy}" r="17" fill="#f2f2f2" stroke="url(#${id}-rim)" stroke-width="2"/>`;
  out += `<g transform="rotate(${pointer} ${cx} ${cy})"><path d="M${cx - 3} ${cy - 17}h6l-3 6z" fill="#00f"/></g>`;
  out += `<text x="${cx}" y="${cy + 4}" text-anchor="middle" class="value">${value}</text>`;
  document.getElementById(id).innerHTML = out;
}

dial('volts', 38, 44, '2В', -75, 6, [
  [-130, -2, 66, '0.1В'], [-78, 3, 38, '1В'], [-33, 13, 21, '10В'],
  [22, 46, 18, '100В'], [72, 64, 35, '200В'], [130, 59, 66, '500В']
]);
dial('freq', 50, 37, '50K', -50, 15, [
  [-130, 18, 59, '1K'], [-40, 11, 19, '100K'], [5, 46, 9, '250K'],
  [32, 67, 19, '333K'], [70, 75, 31, '500K'], [130, 71, 58, '1M', '#a0a0a0']
]);

draw();
window.addEventListener('resize', draw);
```
